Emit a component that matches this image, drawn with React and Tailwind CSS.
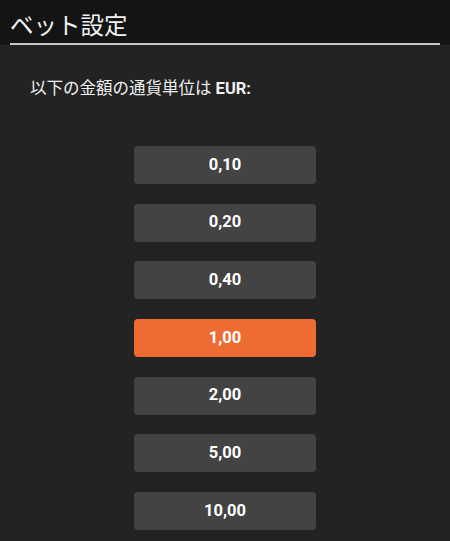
import React from "react";

const values = ["0,10", "0,20", "0,40", "1,00", "2,00", "5,00", "10,00"];

export default function App() {
  return (
    <div
      className="w-[450px] h-[541px] overflow-hidden bg-[#232323] text-white"
      style={{ fontFamily: 'Roboto, "Noto Sans CJK JP", sans-serif' }}
    >
      <div className="bg-[#141414] px-[10px] pt-[11px]">
        <div className="text-[23.5px] leading-[31px] font-normal text-[#f2f2f2] pb-[1px]">ベット設定</div>
        <div className="h-[2px] bg-[#c8c8c8]" />
      </div>
      <div className="pl-[30px] pt-[33px] text-[16.5px] leading-[22px] text-[#f0f0f0]">
        以下の金額の通貨単位は <span className="font-bold">EUR:</span>
      </div>
      <div className="flex flex-col items-center gap-[19.7px] pt-[46px]">
        {values.map((v) => (
          <div
            key={v}
            className={
              "w-[182px] h-[38px] rounded-[4px] flex items-center justify-center text-[16.5px] font-bold " +
              (v === "1,00" ? "bg-[#ee6c33]" : "bg-[#434343]")
            }
          >
            {v}
          </div>
        ))}
      </div>
    </div>
  );
}
